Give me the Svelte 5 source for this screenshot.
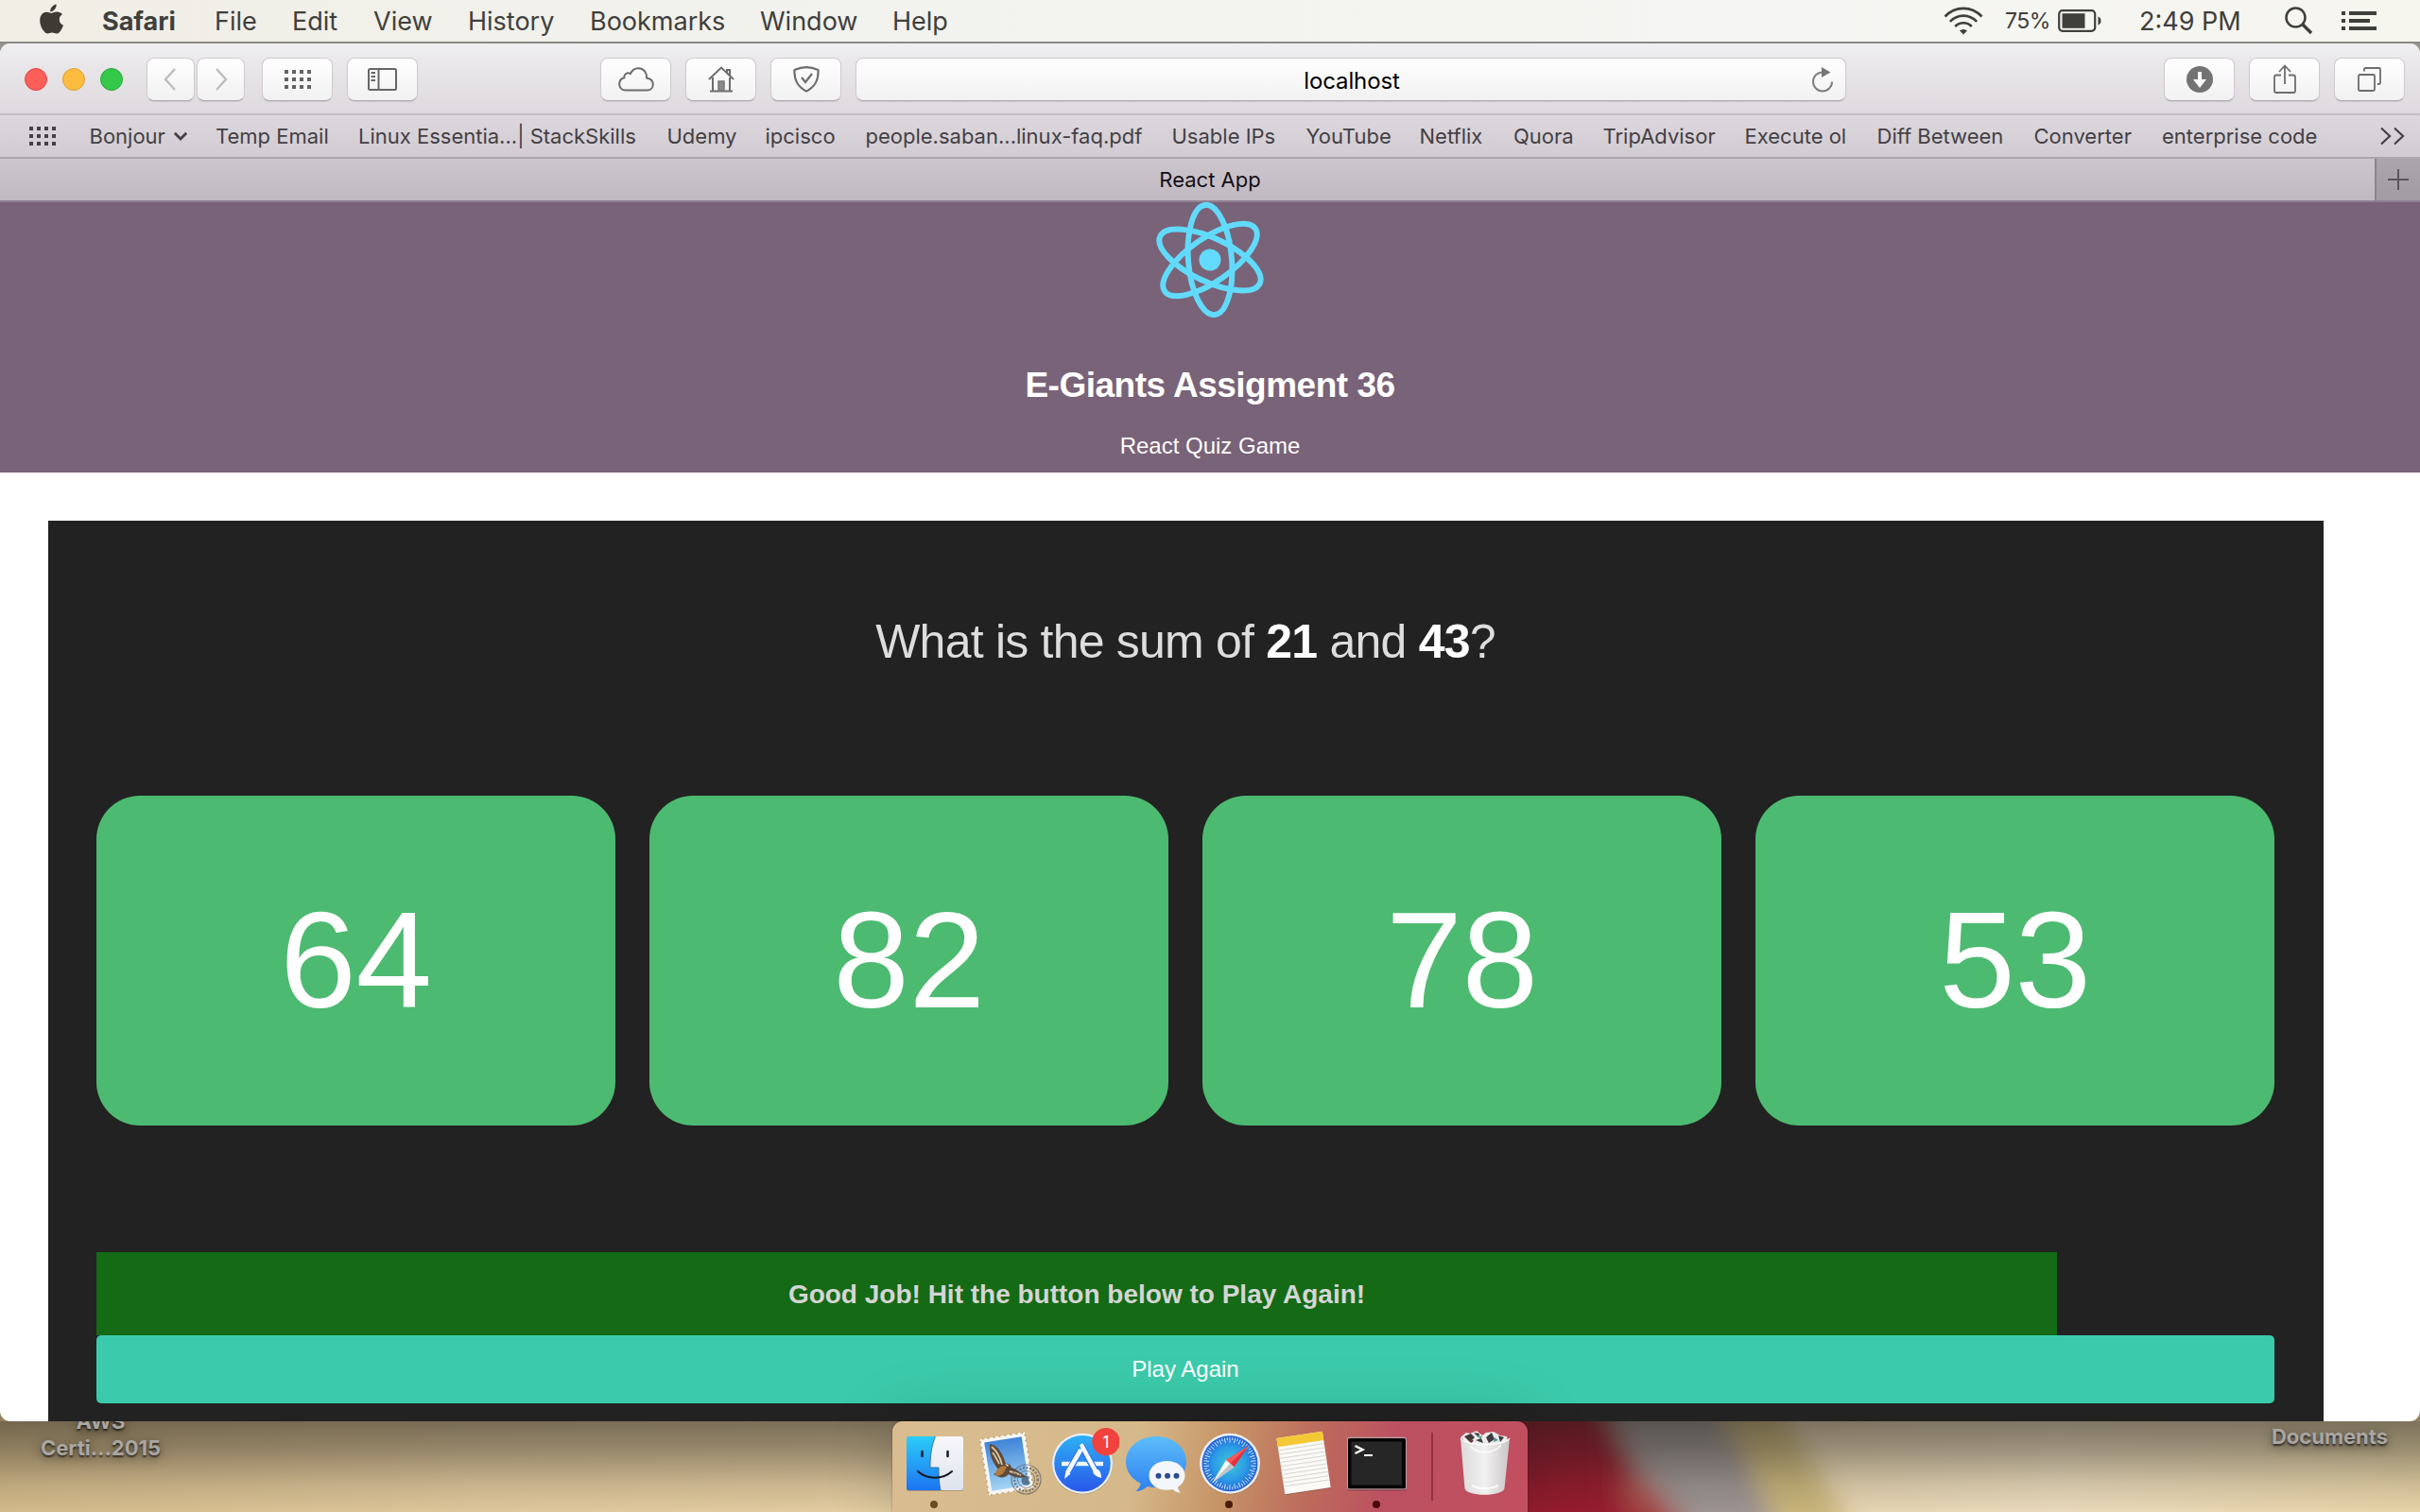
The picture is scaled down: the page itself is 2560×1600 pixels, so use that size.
<script>
  const menus = [
    { label: 'Safari', w: 119, bold: true },
    { label: 'File', w: 82 },
    { label: 'Edit', w: 86 },
    { label: 'View', w: 100 },
    { label: 'History', w: 129 },
    { label: 'Bookmarks', w: 180 },
    { label: 'Window', w: 140 },
    { label: 'Help', w: 80 }
  ];

  const bookmarks = [
    { label: 'Bonjour', w: 133.5, menu: true },
    { label: 'Temp Email', w: 151 },
    { label: 'Linux Essentia...| StackSkills', w: 326.5 },
    { label: 'Udemy', w: 104 },
    { label: 'ipcisco', w: 106 },
    { label: 'people.saban...linux-faq.pdf', w: 324 },
    { label: 'Usable IPs', w: 142 },
    { label: 'YouTube', w: 120 },
    { label: 'Netflix', w: 99.5 },
    { label: 'Quora', w: 94.5 },
    { label: 'TripAdvisor', w: 150 },
    { label: 'Execute ol', w: 140 },
    { label: 'Diff Between', w: 166 },
    { label: 'Converter', w: 135.5 },
    { label: 'enterprise code', w: 229.5 }
  ];

  const answers = [64, 82, 78, 53];
  const ticks = Array.from({ length: 60 }, (_, i) => i * 6);
  const perforation = Array.from({ length: 10 }, (_, i) => i);
  const noteLines = Array.from({ length: 10 }, (_, i) => 24 + i * 4.3);
</script>

<div class="screen">
  <header class="menubar">
    <svg class="apple" width="26" height="32" viewBox="0 0 26 32">
      <path d="M17.6 0.5c.3 2.3-.7 4.300-2 5.700-1.300 1.400-3 2.100-4.400 2-.2-2.100.8-4 2-5.300C14.500 1.500 16.300.6 17.600.5zM24 11c-2.100 1.400-3.300 3.200-3.200 5.700.1 2.800 1.600 4.900 4.200 6-.7 2.200-1.800 4.300-3.200 6.200-1.300 1.700-2.600 2.700-4.200 2.700-1.700 0-2.500-1-4.600-1s-3 1-4.600 1c-1.700 0-3-1.200-4.300-3C1.500 25.300 0 21 .2 17 .4 11.900 3.500 8.700 7.400 8.700c2 0 3.800 1.200 5 1.200 1.300 0 3.300-1.400 5.700-1.300 2.400.1 4.500.9 5.900 2.400z" />
    </svg>
    <nav class="menus">
      {#each menus as m}
        <span class:bold={m.bold} style:width="{m.w}px">{m.label}</span>
      {/each}
    </nav>
    <div class="status">
      <svg class="wifi" width="42" height="30" viewBox="0 0 42 30">
        <g fill="none" stroke="#3f403c" stroke-width="2.600">
          <path d="M1.500 10.500C12.500-1 29.500-1 40.500 10.500" />
          <path d="M6.800 15.800C15 7.500 27 7.500 35.200 15.800" />
          <path d="M12.200 21c5-5 12.600-5 17.600 0" />
        </g>
        <path d="M17 25.500c2.500-2 5.500-2 8 0L21 29.500z" fill="#3f403c" />
      </svg>
      <span class="percent">75%</span>
      <svg class="battery" width="47" height="24" viewBox="0 0 47 24">
        <rect x="1.200" y="1.200" width="38" height="21.600" rx="3.500" fill="none" stroke="#3f403c" stroke-width="2.200" />
        <rect x="4.500" y="4.200" width="24" height="15.600" fill="#3f403c" />
        <path d="M42.500 7.500c4 1 4 8 0 9z" fill="#3f403c" />
      </svg>
      <span class="clock">2:49 PM</span>
      <svg class="search" width="30" height="30" viewBox="0 0 30 30" fill="none" stroke="#3f403c">
        <circle cx="11.500" cy="11.500" r="10" stroke-width="2.500" />
        <path d="M18.500 18.500L28 28" stroke-width="3.300" />
      </svg>
      <svg width="37" height="22" viewBox="0 0 37 22" fill="#3f403c">
        <path d="M0 1h4v4H0zM8 1h29v4H8zM0 9h4v4H0zM8 9h22v4H8zM0 17h4v4H0zM8 17h29v4H8z" />
      </svg>
    </div>
  </header>

  <main class="window">
    <div class="toolbar">
      <div class="lights"><i class="red"></i><i class="amber"></i><i class="green"></i></div>
      <div class="pair">
        <button class="btn narrow" aria-label="Back">
          <svg width="16" height="26" viewBox="0 0 16 26"><path d="M12 2L2 13l10 11" fill="none" stroke="#bdbdbd" stroke-width="2.400" /></svg>
        </button>
        <button class="btn narrow" aria-label="Forward">
          <svg width="16" height="26" viewBox="0 0 16 26"><path d="M3 2l10 11L3 24" fill="none" stroke="#bdbdbd" stroke-width="2.400" /></svg>
        </button>
      </div>
      <button class="btn grid-btn" aria-label="Top Sites">
        <svg width="28" height="20" viewBox="0 0 28 20" fill="#636363">
          {#each [0, 8, 16] as y}{#each [0, 8, 16, 24] as x}<rect {x} {y} width="4" height="4" />{/each}{/each}
        </svg>
      </button>
      <button class="btn side-btn" aria-label="Sidebar">
        <svg width="31" height="24" viewBox="0 0 31 24" fill="none" stroke="#666" stroke-width="2">
          <rect x="1" y="1" width="29" height="22" rx="1.500" /><path d="M11.500 1v22M3.500 5h4.500M3.500 9h4.500M3.500 13h4.500" />
        </svg>
      </button>
      <button class="btn cloud-btn" aria-label="iCloud Tabs">
        <svg width="38" height="26" viewBox="0 0 38 26" fill="none" stroke="#6c6c6c" stroke-width="2">
          <path d="M8 24.500C3.500 24.500 1.200 21.500 1.200 18c0-3.800 2.200-6.200 5.200-6.800C5.800 7.500 9.500 5 12.800 7 15 2.600 18.500 1 21.800 1.200c5.200.3 8.600 4.700 8.200 10.200 4.200.6 6.800 3.200 6.800 6.800 0 3.600-2.600 6.300-6.500 6.300z" />
        </svg>
      </button>
      <button class="btn home-btn" aria-label="Home">
        <svg width="28" height="28" viewBox="0 0 28 28" fill="none" stroke="#6c6c6c" stroke-width="2">
          <path d="M1 14L14 1.600 27 14M5 12v14M23 12v14M2 26.500h24M20 7V4h3v6" />
          <rect x="11" y="16" width="6" height="10" fill="#8a8a8a" stroke="#777" stroke-width="1.500" />
        </svg>
      </button>
      <button class="btn shield-btn" aria-label="Privacy">
        <svg width="28" height="28" viewBox="0 0 28 28" fill="none" stroke="#6c6c6c">
          <path d="M14 1.200c4 0 8 .8 12.500 2.800.6 11-3 17.600-12.500 22.600C4.500 21.600.9 15 1.500 4 6 2 10 1.200 14 1.200z" stroke-width="2.200" />
          <path d="M9 12l4 5 7-9" stroke-width="2.300" />
        </svg>
      </button>
      <div class="url">
        <span>localhost</span>
        <svg class="reload" width="24" height="28" viewBox="0 0 24 28">
          <path d="M12 5.400A10 10 0 1 0 22 15.400" fill="none" stroke="#808080" stroke-width="2" />
          <path d="M11 0l9.500 5.500L11 11z" fill="#777" />
        </svg>
      </div>
      <button class="btn down-btn" aria-label="Downloads">
        <svg width="28" height="28" viewBox="0 0 28 28"><circle cx="14" cy="14" r="14" fill="#737373" /><path d="M12 6h4v8h5l-7 9-7-9h5z" fill="#fff" /></svg>
      </button>
      <button class="btn share-btn" aria-label="Share">
        <svg width="24" height="32" viewBox="0 0 24 32" fill="none" stroke="#6c6c6c" stroke-width="1.800">
          <path d="M8 11.500H3q-2 0-2 2V28q0 2 2 2h18q2 0 2-2V13.500q0-2-2-2h-5M12 21V2M6 8l6-6.500L18 8" />
        </svg>
      </button>
      <button class="btn tabs-btn" aria-label="Show All Tabs">
        <svg width="25" height="26" viewBox="0 0 25 26" fill="none" stroke="#6c6c6c" stroke-width="1.800">
          <rect x="1" y="8" width="17" height="17" rx="1.500" /><path d="M7 4.500V2.500q0-1.500 1.500-1.500h14q1.500 0 1.500 1.500v14q0 1.500-1.500 1.500H21" />
        </svg>
      </button>
    </div>

    <div class="bookmarks">
      <svg class="apps" width="28" height="20" viewBox="0 0 28 20" fill="#444044">
        {#each [0, 8, 16] as y}{#each [0, 8, 16, 24] as x}<rect {x} {y} width="4" height="4" />{/each}{/each}
      </svg>
      {#each bookmarks as b}
        <span style:width="{b.w}px">{b.label}{#if b.menu}<svg class="chev" width="16" height="11" viewBox="0 0 16 11"><path d="M1.800 1.800L8 8l6.200-6.200" fill="none" stroke="#444044" stroke-width="2.800" /></svg>{/if}</span>
      {/each}
      <svg width="28" height="20" viewBox="0 0 28 20" fill="none" stroke="#444044" stroke-width="2.200"><path d="M2 1.500L11 10l-9 8.500M16 1.500L25 10l-9 8.500" /></svg>
    </div>

    <div class="tabs">
      <div class="tab">React App</div>
      <div class="newtab">
        <svg width="22" height="22" viewBox="0 0 22 22" stroke="#5a545b" stroke-width="2"><path d="M0 11h22M11 0v22" /></svg>
      </div>
    </div>

    <section class="hero">
      <svg class="logo" width="122" height="124" viewBox="-61 -61 122 124">
        <g transform="rotate(-4.700)" fill="none" stroke="#61dafb" stroke-width="6">
          <ellipse rx="23" ry="58.300" />
          <ellipse rx="23" ry="58.300" transform="rotate(60)" />
          <ellipse rx="23" ry="58.300" transform="rotate(120)" />
          <circle r="11.600" fill="#61dafb" stroke="none" />
        </g>
      </svg>
      <h1>E-Giants Assigment 36</h1>
      <p>React Quiz Game</p>
    </section>

    <section class="page">
      <div class="game">
        <div class="question">What is the sum of <b>21</b> and <b>43</b>?</div>
        <div class="cards">
          {#each answers as a}<div class="card">{a}</div>{/each}
        </div>
        <div class="result">Good Job! Hit the button below to Play Again!</div>
        <button class="again">Play Again</button>
      </div>
    </section>
  </main>

  <footer class="desktop">
    <svg class="wallpaper" width="2560" height="96" viewBox="0 0 2560 96">
      <defs>
        <linearGradient id="sand" x1="0" x2="1">
          <stop offset="0" stop-color="#d3ba8a" /><stop offset=".2" stop-color="#dfc79c" /><stop offset=".37" stop-color="#e3cca0" />
          <stop offset=".7" stop-color="#e2d0ab" /><stop offset=".85" stop-color="#eadabb" /><stop offset="1" stop-color="#e6d3a6" />
        </linearGradient>
        <linearGradient id="shade" x1="0" x2="0" y1="0" y2="1">
          <stop offset="0" stop-color="#1c1a16" stop-opacity=".52" /><stop offset=".3" stop-color="#1c1a16" stop-opacity=".38" />
          <stop offset=".7" stop-color="#1c1a16" stop-opacity=".12" /><stop offset="1" stop-color="#1c1a16" stop-opacity="0" />
        </linearGradient>
        <filter id="soft" x="-20%" y="-50%" width="140%" height="200%"><feGaussianBlur stdDeviation="13" /></filter>
      </defs>
      <rect width="2560" height="96" fill="url(#sand)" />
      <g filter="url(#soft)">
        <path d="M1780-40h85l50 80 60 100H1860z" fill="#c8b47a" />
        <path d="M1660-40h142l45 80 45 100H1750z" fill="#9c9390" />
        <path d="M1540-40h148l32 70 65 110H1540z" fill="#951a2e" />
        <path d="M1725 100l-15-40 25-5 55 60z" fill="#a84c4a" />
      </g>
      <rect width="2560" height="96" fill="url(#shade)" />
    </svg>

    <div class="file left"><span>AWS</span><span>Certi...2015</span></div>

    <div class="dock">
      <svg class="slot" viewBox="0 0 78 96">
        <defs>
          <linearGradient id="fi" x1="0" x2="0" y1="0" y2="1"><stop offset="0" stop-color="#2bcdf9" /><stop offset="1" stop-color="#1e74f2" /></linearGradient>
          <linearGradient id="fw" x1="0" x2="0" y1="0" y2="1"><stop offset="0" stop-color="#f8f8fb" /><stop offset="1" stop-color="#dfe3ed" /></linearGradient>
        </defs>
        <rect x="9" y="16" width="60" height="58" rx="2" fill="#00000033" />
        <rect x="9" y="16" width="60" height="57" rx="2" fill="url(#fi)" />
        <path d="M39.500 16H67q2 0 2 2v53q0 2-2 2H45c-1.500-7-2-14-2-24h-9c0-13 1.500-23 5.500-33z" fill="url(#fw)" />
        <path d="M39.500 16C35.500 26 34 36 34 49h9c0 10 .5 17 2 24" fill="none" stroke="#1c5fa8" stroke-width=".8" />
        <path d="M25.500 32v5M52.500 32v5" stroke="#15213a" stroke-width="2.600" stroke-linecap="round" />
        <path d="M21 53c10 9 26 9 36 0" fill="none" stroke="#14171f" stroke-width="2" stroke-linecap="round" />
        <circle cx="38" cy="88" r="4" fill="#6b4d1f" />
      </svg>

      <svg class="slot" viewBox="0 0 78 96">
        <defs><linearGradient id="sky" x1="0" x2="0" y1="0" y2="1"><stop offset="0" stop-color="#3f84d8" /><stop offset="1" stop-color="#a3d4f2" /></linearGradient></defs>
        <g transform="rotate(-9 37 45)">
          <rect x="13" y="15" width="48" height="60" fill="#f7f7f7" />
          <g fill="#c9ab78">
            {#each perforation as i}
              <circle cx="13" cy={18 + i * 6} r="1.200" /><circle cx="61" cy={18 + i * 6} r="1.200" />
            {/each}
            {#each perforation.slice(0, 8) as i}
              <circle cx={16 + i * 6} cy="15" r="1.200" /><circle cx={16 + i * 6} cy="75" r="1.200" />
            {/each}
          </g>
          <rect x="17" y="19" width="40" height="52" fill="url(#sky)" />
        </g>
        <path d="M19 24c9 1 14 11 17 21 2-1 5 0 6 4 6 2 11 7 17 10-8 2-15 0-20-3-3 3-6 4-10 3l-6-3 6-4c-7-8-11-17-10-28z" fill="#5f4a38" />
        <path d="M21 27c5 4 9 11 11 19M40 53c5 1 8 2 12 4M22 33c3 4 5 8 7 12" stroke="#d6c5a5" stroke-width="1.800" fill="none" />
        <path d="M25 54c3-5 8-8 12-6l-3 6c-2 3-6 4-9 3z" fill="#b07a42" /><path d="M35 45l4 1-1 2z" fill="#f0e6d4" />
        <g fill="none" stroke="#55585c" opacity=".65"><circle cx="57.500" cy="61.500" r="15.500" stroke-width="1.200" /><circle cx="57.500" cy="61.500" r="9" stroke-width="1" /><circle cx="57.500" cy="61.500" r="12.300" stroke-width="2.600" stroke-dasharray="2 1.600" /></g>
        <path d="M58.500 54.500c0 2-1 3-2 3 0-2 1-3 2-3zM61.500 59c-2 1.500-1.500 4.500.5 5.500-1 3-2.500 3.500-4.500 2.700-2 .8-4 0-5-4-.4-4 2.500-5.700 5-4.700 1.500-.5 3-.3 4 .5z" fill="#44607c" opacity=".8" />
      </svg>

      <svg class="slot" viewBox="0 0 78 96">
        <defs><linearGradient id="as" x1="0" x2="0" y1="0" y2="1"><stop offset="0" stop-color="#2fb0f6" /><stop offset="1" stop-color="#2858ea" /></linearGradient></defs>
        <circle cx="39" cy="45.500" r="32" fill="#00000030" />
        <circle cx="39" cy="44.700" r="32" fill="#e9eef6" /><circle cx="39" cy="44.700" r="29.800" fill="url(#as)" />
        <path d="M17 45h44" stroke="#eef5ff" stroke-width="4.600" />
        <path d="M36 32L24 54M38 26l15 27" stroke="#2b74ee" stroke-width="7" />
        <path d="M36.500 31.500L24 53M38.500 26l14 26" stroke="#f5f9ff" stroke-width="4.600" stroke-linecap="round" />
        <path d="M21.500 52.500l5 3-6.500 5.500zM50 53.500l5-3c3 2 4 5 4 9.500-4-1-8-3-9-6.500z" fill="#f5f9ff" />
        <circle cx="64" cy="21.700" r="14.700" fill="#f2423e" />
        <text x="64" y="27.700" text-anchor="middle" font-size="17" fill="#fff">1</text>
      </svg>

      <svg class="slot" viewBox="0 0 78 96">
        <defs><linearGradient id="ms" x1="0" x2="0" y1="0" y2="1"><stop offset="0" stop-color="#5cbefb" /><stop offset="1" stop-color="#2f7ff0" /></linearGradient></defs>
        <path d="M39 16c18 0 32 11.500 32 27S57 70 39 70c-3 0-6-.3-9-1-4 3-8 5-12.500 5 3-2.500 5-5.500 5-8.500C13 61 7 53 7 43c0-15.500 14-27 32-27z" fill="url(#ms)" />
        <path d="M50.500 42c11 0 19 6.500 19 15.500 0 5-3 9.500-7.500 12 .2 2.500 1.500 4.500 3 6-3.500 0-6.500-1.500-8.500-3.500-2 .5-4 .8-6 .8-11 0-19-6.500-19-15.300S39.500 42 50.500 42z" fill="#f3f6fb" />
        <g fill="#2b4e8c"><circle cx="41.500" cy="57.700" r="3" /><circle cx="51" cy="57.700" r="3" /><circle cx="60.500" cy="57.700" r="3" /></g>
      </svg>

      <svg class="slot" viewBox="0 0 78 96">
        <defs><radialGradient id="sf"><stop offset="0" stop-color="#3fc6d6" /><stop offset=".6" stop-color="#2b9be6" /><stop offset="1" stop-color="#2360d6" /></radialGradient></defs>
        <circle cx="39" cy="45.500" r="32" fill="#00000030" />
        <circle cx="39" cy="44.700" r="32" fill="#ebeef4" /><circle cx="39" cy="44.700" r="29.500" fill="url(#sf)" />
        {#each ticks as t, i}
          <path d="M39 17v{i % 2 ? 3 : 5.500}" stroke="#dcefff" stroke-width=".9" transform="rotate({t} 39 44.700)" />
        {/each}
        <path d="M59 26L43.500 48.500 35 41z" fill="#e8303a" /><path d="M59 26L39.300 44.800 35 41z" fill="#f5595c" />
        <path d="M20.500 65L35 41l8.500 7.500z" fill="#fafafa" /><path d="M20.500 65l18.800-20.200 4.200 3.700z" fill="#bfc3c9" />
        <circle cx="38" cy="88" r="4" fill="#4a1c08" />
      </svg>

      <svg class="slot" viewBox="0 0 78 96">
        <g transform="rotate(-8.500 39 43.500)">
          <rect x="14.500" y="15" width="49" height="60" fill="#00000030" />
          <rect x="14.500" y="14" width="49" height="60" fill="#fbfaf6" />
          <rect x="14.500" y="14" width="49" height="9.500" fill="#f5c835" />
          {#each noteLines as y}<path d="M14.500 {y + 3}h49" stroke="#d6d3cf" stroke-width=".9" />{/each}
        </g>
      </svg>

      <svg class="slot" viewBox="0 0 78 96">
        <rect x="7" y="17.500" width="63" height="56" rx="2.500" fill="#00000040" />
        <rect x="7" y="16.800" width="63" height="55.500" rx="2.500" fill="#b9a0a4" />
        <rect x="8" y="18" width="61" height="53.300" rx="1.500" fill="#050505" />
        <rect x="11.500" y="21.500" width="53.500" height="46" fill="#262626" />
        <path d="M15.500 26l8 4-8 4" fill="none" stroke="#fff" stroke-width="2.400" /><path d="M25 36h9" stroke="#fff" stroke-width="2" />
        <circle cx="38" cy="88" r="4" fill="#4d0309" />
      </svg>

      <i class="divider"></i>

      <svg class="slot" viewBox="0 0 78 96">
        <defs><linearGradient id="tr"><stop offset="0" stop-color="#dcdadb" /><stop offset=".5" stop-color="#f2f1f1" /><stop offset="1" stop-color="#c9c6c7" /></linearGradient></defs>
        <path d="M13 17l6-5 4 1 7-3 6 5 4-3 8-1 7 4 7 1 1 6-12 7H26z" fill="#eceaea" />
        <path d="M17 16l7-3 4 4-5 5zM27 12l6 1-1 4zM40 17l6-5 3 7-6 4zM53 15l6 2-4 5zM29 20l6-2 2 5z" fill="#3e3a3d" />
        <path d="M31 15l5 1-2 3zM49 17l4 3-5 2z" fill="#4f9b94" /><path d="M22 19l5 1-3 4z" fill="#6b3c33" />
        <path d="M13 18c6 9 46 9 52 0L59.500 71c-1.500 9-40.500 9-42 0z" fill="url(#tr)" />
        <path d="M24 27c8 8 24 8 32-2M25 68c8 4 20 4 28 0" fill="none" stroke="#fff" stroke-width="2" opacity=".8" />
        <path d="M13 18c6 9 46 9 52 0" fill="none" stroke="#fff" stroke-width="1.300" />
      </svg>
    </div>

    <div class="file right"><span>Documents</span></div>
  </footer>
</div>

<style>
  :global(body) { margin: 0; background: #8f8c82; }
  .screen {
    width: 2560px; height: 1600px; overflow: hidden; display: flex; flex-direction: column;
    font-family: Inter, "Liberation Sans", sans-serif; background: linear-gradient(#96958f 0 700px, #93825f 1400px);
  }
  svg { display: block; flex: none; }
  span { white-space: nowrap; }

  .menubar {
    height: 44px; flex: none; display: flex; align-items: center; justify-content: space-between;
    padding: 0 46px 0 42px; border-bottom: 2px solid #8b8a87;
    background: linear-gradient(90deg, #f0eee5, #f2f2ee 35%, #f5f5f3 75%, #f6f5ee); color: #3f403c; font-size: 27px; letter-spacing: 0;
  }
  .apple { fill: #3d3b34; margin-top: -5px; }
  .menus { display: flex; margin-left: 40px; margin-right: auto; }
  .menus span { flex: none; }
  .bold { font-weight: 700; }
  .status { display: flex; align-items: center; }
  .wifi { margin-right: 1px; }
  .percent { margin-left: 22px; width: 56px; font-size: 23px; letter-spacing: -0.5px; }
  .clock { margin-left: 39px; width: 154px; }
  .search { margin-right: 30px; }

  .window { height: 1458px; flex: none; overflow: hidden; border-radius: 11px; background: #fff; display: flex; flex-direction: column; }

  .toolbar {
    height: 76px; flex: none; display: flex; align-items: center; padding: 2px 16px 0 26px; box-sizing: border-box;
    border-bottom: 2px solid #c3bfc4; background: linear-gradient(#f0eff1, #e9e7ea 30%, #ded9de);
  }
  .lights { display: flex; gap: 16px; width: 129px; }
  .lights i { width: 22px; height: 22px; border-radius: 50%; border: 1px solid; }
  .lights .red { background: #fc5e59; border-color: #df4744; }
  .lights .amber { background: #fdbc40; border-color: #dd9f35; }
  .lights .green { background: #34c84a; border-color: #27aa35; }
  .pair { display: flex; gap: 2px; }
  .btn, .url {
    height: 46px; width: 75px; box-sizing: border-box; padding: 0; border: 1px solid #cfcbd0; border-bottom-color: #aeabb0; border-radius: 8px;
    background: linear-gradient(#fff, #f1f1f1); display: flex; align-items: center; justify-content: center; flex: none;
    box-shadow: 0 1px 1px #00000018;
  }
  .btn.narrow { width: 51px; }
  .grid-btn { margin-left: 18px; }
  .side-btn { margin-left: 15px; }
  .cloud-btn { margin-left: 193px; }
  .home-btn, .shield-btn { margin-left: 15px; }
  .url { width: 1048px; margin-left: 15px; font-size: 24px; color: #000; padding: 2px 12px 0 38px; letter-spacing: -0.1px; }
  .url span { margin: 0 auto; }
  .down-btn { margin-left: auto; }
  .share-btn, .tabs-btn { margin-left: 15px; }

  .bookmarks {
    height: 46px; box-sizing: border-box; flex: none; display: flex; align-items: center; padding-left: 31px; color: #444044;
    border-bottom: 2px solid #aca6ad; background: linear-gradient(#ddd8dd, #d1cbd2); font-size: 22px; letter-spacing: 0;
  }
  .apps { margin-right: 35.500px; }
  .bookmarks span { flex: none; display: flex; align-items: center; }
  .chev { margin-left: 8px; }

  .tabs { height: 46px; box-sizing: border-box; flex: none; display: flex; border-bottom: 2px solid #8f7f90; background: linear-gradient(#cdc6cd, #c1b9c1); }
  .tab { flex: 1; padding-left: 48px; display: flex; align-items: center; justify-content: center; font-size: 22px; color: #140f15; }
  .newtab { width: 46px; border-left: 2px solid #8c858c; display: flex; align-items: center; justify-content: center; background: linear-gradient(#aca5ac, #a29ba2); }

  .hero { height: 286px; flex: none; background: #796378; color: #fff; display: flex; flex-direction: column; align-items: center; font-family: "Liberation Sans", Arial, sans-serif; }
  .hero h1 { margin: 48px 0 0; font-size: 37px; line-height: 44px; letter-spacing: -0.500px; }
  .hero p { margin: 28px 0 0; font-size: 24px; line-height: 28px; }

  .page { flex: 1; padding: 51px 0 0 51px; font-family: "Liberation Sans", Arial, sans-serif; }
  .game { width: 2407px; height: 1000px; box-sizing: border-box; padding: 98px 52px 0 51px; background: #222; }
  .question { text-align: center; font-size: 50px; line-height: 60px; letter-spacing: -0.780px; color: #ddd; margin-bottom: 133px; }
  .question b { color: #fff; }
  .cards { display: grid; grid-template-columns: repeat(4, 1fr); gap: 36px; }
  .card { height: 349px; border-radius: 46px; background: #4dba71; color: #fff; font-size: 145px; line-height: 349px; letter-spacing: -0.500px; text-align: center; }
  .result { margin-top: 134px; width: 2074px; height: 88px; line-height: 89px; background: #146a15; color: #d5d5d5; font-weight: 700; font-size: 28px; text-align: center; }
  .again {
    display: block; width: 100%; height: 72px; border: 0; border-radius: 5px; padding: 0; background: #3bcbac; color: #fff;
    font: 24px/72px "Liberation Sans", Arial, sans-serif;
  }

  .desktop { height: 96px; flex: none; display: flex; position: relative; }
  .wallpaper { position: absolute; left: 0; top: 0; }
  .file {
    position: relative; overflow: hidden; display: flex; flex-direction: column; align-items: center; box-sizing: border-box;
    color: #aaa6a3; font-weight: 700; font-size: 22px; line-height: 28px; text-shadow: 0 2px 2px #0009, 0 3px 12px #0008;
  }
  .left { width: 944px; padding-right: 731px; }
  .left span:first-child { margin-top: -14px; }
  .right { flex: 1; align-items: flex-end; padding: 2px 34px 0 0; }
  .dock {
    position: relative; flex: none; width: 672px; box-sizing: border-box; padding: 0 6px; display: flex; border-radius: 11px 11px 0 0;
    background: linear-gradient(100deg, #d9bd90 0, #d6b98a 38%, #c69467 52%, #bd6a5c 66%, #bb5060 78%, #c24f5f 100%);
    box-shadow: 0 0 2px #0006, 0 0 70px #00000030;
  }
  .slot { width: 78px; height: 96px; }
  .divider { width: 2px; height: 72px; margin: 12px 16px 0 18px; background: #96303f; }
</style>
